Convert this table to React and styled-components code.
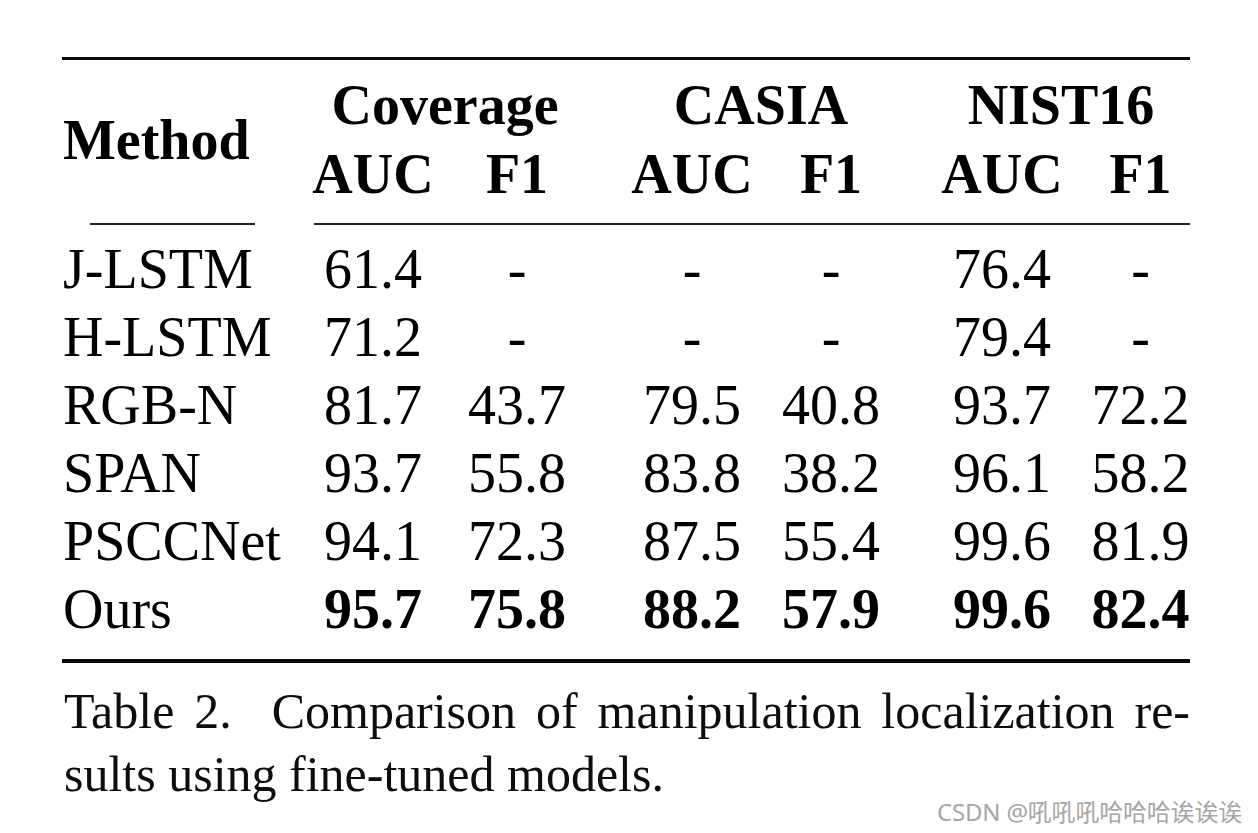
import React from "react";
import styled, { createGlobalStyle } from "styled-components";

const Global = createGlobalStyle`
  html, body { margin: 0; padding: 0; background: #fff; }
  body { font-family: "Liberation Serif", "Times New Roman", serif; color: #000; }
`;

const COLS = "239px 144px 144px 33px 140px 138px 32px 140px 19px 99px";
const TRACK = [2, 3, 5, 6, 8, 10];

const Page = styled.div`
  position: relative;
  width: 1258px;
  height: 833px;
  overflow: hidden;
  padding: 57px 0 0 62px;
  box-sizing: border-box;
`;

const Table = styled.div`
  width: 1128px;
  display: flex;
  flex-direction: column;
`;

const Rule = styled.div`
  height: ${(p) => p.$h}px;
  margin-top: ${(p) => p.$mt || 0}px;
  background: #0a0a0a;
`;

const Grid = styled.div`
  display: grid;
  grid-template-columns: ${COLS};
  grid-auto-rows: ${(p) => p.$row}px;
  margin-top: ${(p) => p.$mt || 0}px;
  font-size: 56px;
  line-height: ${(p) => p.$row}px;
`;

const Cell = styled.div`
  grid-column: ${(p) => p.$col} / span ${(p) => p.$span || 1};
  grid-row: ${(p) => p.$row || "auto"};
  text-align: ${(p) => p.$align || "center"};
  font-weight: ${(p) => (p.$bold ? 700 : 400)};
  align-self: ${(p) => p.$valign || "stretch"};
  white-space: nowrap;
  padding-left: ${(p) => p.$pl || 0}px;
`;

const RuleGrid = styled.div`
  display: grid;
  grid-template-columns: ${COLS};
  margin-top: 14px;
  height: 2px;
`;

const CmidRule = styled.div`
  grid-column: ${(p) => p.$col} / ${(p) => p.$end};
  margin-left: ${(p) => p.$ml}px;
  margin-right: ${(p) => p.$mr || 0}px;
  height: 2px;
  background: #222;
`;

const Caption = styled.div`
  width: 1128px;
  margin-top: 17px;
  padding-left: 2px;
  box-sizing: border-box;
  font-size: 50px;
  line-height: 63px;
  color: #0d0d0d;
`;

const CapLine = styled.div`
  text-align: ${(p) => (p.$justify ? "justify" : "left")};
  text-align-last: ${(p) => (p.$justify ? "justify" : "auto")};
  white-space: nowrap;
`;

const Watermark = styled.div`
  position: absolute;
  right: 16px;
  bottom: 6px;
  font-family: "Noto Sans", "Noto Sans CJK SC", sans-serif;
  font-size: 24px;
  line-height: 30px;
  color: #a6a6a6;
  letter-spacing: -0.2px;
`;

const groups = [
  { name: "Coverage", col: 2, span: 2 },
  { name: "CASIA", col: 5, span: 2 },
  { name: "NIST16", col: 8, span: 3 },
];

const rows = [
  { m: "J-LSTM", v: ["61.4", "-", "-", "-", "76.4", "-"] },
  { m: "H-LSTM", v: ["71.2", "-", "-", "-", "79.4", "-"] },
  { m: "RGB-N", v: ["81.7", "43.7", "79.5", "40.8", "93.7", "72.2"] },
  { m: "SPAN", v: ["93.7", "55.8", "83.8", "38.2", "96.1", "58.2"] },
  { m: "PSCCNet", v: ["94.1", "72.3", "87.5", "55.4", "99.6", "81.9"] },
  { m: "Ours", v: ["95.7", "75.8", "88.2", "57.9", "99.6", "82.4"], bold: true },
];

export default function App() {
  return (
    <>
      <Global />
      <Page>
        <Table>
          <Rule $h={3} />
          <Grid $row={69} $mt={11}>
            <Cell $col={1} $row="1 / 3" $align="left" $bold $valign="center" $pl={1}>
              Method
            </Cell>
            {groups.map((g) => (
              <Cell key={g.name} $col={g.col} $span={g.span} $row={1} $bold>
                {g.name}
              </Cell>
            ))}
            {["AUC", "F1", "AUC", "F1", "AUC", "F1"].map((t, i) => (
              <Cell key={i} $col={TRACK[i]} $row={2} $bold>
                {t}
              </Cell>
            ))}
          </Grid>
          <RuleGrid>
            <CmidRule $col={1} $end={2} $ml={28} $mr={46} />
            <CmidRule $col={2} $end={-1} $ml={13} />
          </RuleGrid>
          <Grid $row={68} $mt={10}>
            {rows.map((r) => (
              <React.Fragment key={r.m}>
                <Cell $col={1} $align="left" $pl={1}>
                  {r.m}
                </Cell>
                {r.v.map((v, i) => (
                  <Cell key={i} $col={TRACK[i]} $bold={r.bold}>
                    {v}
                  </Cell>
                ))}
              </React.Fragment>
            ))}
          </Grid>
          <Rule $h={4} $mt={16} />
        </Table>
        <Caption>
          <CapLine $justify>
            Table 2.{"\u00a0"} Comparison of manipulation localization re-
          </CapLine>
          <CapLine>sults using fine-tuned models.</CapLine>
        </Caption>
        <Watermark>CSDN @吼吼吼哈哈哈诶诶诶</Watermark>
      </Page>
    </>
  );
}
